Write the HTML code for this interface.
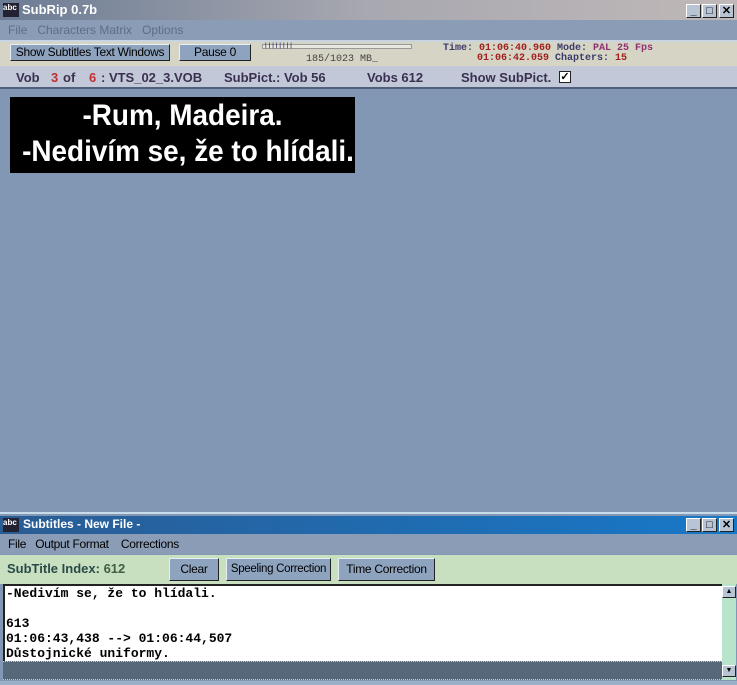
<!DOCTYPE html>
<html><head><meta charset="utf-8"><style>
*{margin:0;padding:0;box-sizing:border-box}
body{width:737px;height:685px;overflow:hidden;background:#8297b3;font-family:"Liberation Sans",sans-serif;position:relative}
.a{position:absolute;white-space:pre}
.wb{position:absolute;width:15px;height:14px;background:#b8c4d4;border:1px solid;border-color:#fff #222 #222 #fff;font-size:11px;line-height:12px;text-align:center;font-weight:bold;color:#000}
.btn{position:absolute;background:#8ea3be;border:1px solid;border-color:#e8eef4 #222 #222 #e8eef4;font-size:12px;text-align:center;color:#000;white-space:nowrap;letter-spacing:-0.3px}
.mono{font-family:"Liberation Mono",monospace;font-weight:bold}
.st{font-family:"Liberation Sans",sans-serif;font-weight:bold;font-size:13px;color:#3a3050;top:70px}
</style></head><body>
<div class="a" style="left:0;top:0;width:737px;height:20px;background:linear-gradient(90deg,#6c7c94,#a8a8b0 50%,#c0b8b8)"></div>
<div class="a" style="left:3px;top:3px;width:16px;height:14px;background:#223;color:#fff;font-size:8px;font-weight:bold;line-height:9px">abc</div>
<div class="a" style="left:22px;top:2px;color:#fff;font-weight:bold;font-size:13px">SubRip 0.7b</div>
<div class="wb" style="left:686px;top:4px">_</div><div class="wb" style="left:702px;top:4px">□</div><div class="wb" style="left:719px;top:4px">✕</div>
<div class="a" style="left:0;top:20px;width:737px;height:20px;background:#8a9cb6"></div>
<div class="a" style="left:8px;top:23px;font-size:12px;color:#5c6e88">File   Characters Matrix   Options</div>
<div class="a" style="left:0;top:40px;width:737px;height:26px;background:#d6d4c4;border-top:2px solid #c8d4e0"></div>
<div class="btn" style="left:10px;top:44px;width:160px;height:17px;line-height:15px">Show Subtitles Text Windows</div>
<div class="btn" style="left:179px;top:44px;width:72px;height:17px;line-height:15px">Pause 0</div>
<div class="a" style="left:262px;top:44px;width:150px;height:5px;border:1px solid #999;background:#e8e8e0"></div>
<div class="a mono" style="left:264px;top:42px;font-size:6px;color:#446">||||||||</div>
<div class="a" style="left:306px;top:54px;font-size:10px;color:#444;font-family:'Liberation Mono',monospace">185/1023 MB_</div>
<div class="a mono" style="left:443px;top:44px;font-size:10px;line-height:10px;color:#3a3a6a">Time: <span style="color:#a02020">01:06:40.960</span> Mode: <span style="color:#903070">PAL 25 Fps</span></div>
<div class="a mono" style="left:477px;top:54px;font-size:10px;line-height:10px;color:#3a3a6a"><span style="color:#a02020">01:06:42.059</span> Chapters: <span style="color:#a02020">15</span></div>
<div class="a" style="left:0;top:66px;width:737px;height:23px;background:#c2c8d8;border-bottom:2px solid #50607a"></div>
<div class="a st" style="left:16px">Vob</div>
<div class="a st" style="left:51px;color:#c03030">3</div>
<div class="a st" style="left:63px">of</div>
<div class="a st" style="left:89px;color:#c03030">6</div>
<div class="a st" style="left:101px">: VTS_02_3.VOB</div>
<div class="a st" style="left:224px">SubPict.: Vob 56</div>
<div class="a st" style="left:367px">Vobs 612</div>
<div class="a st" style="left:461px">Show SubPict.</div>
<div class="a" style="left:559px;top:71px;width:12px;height:12px;background:#fff;border:1px solid #222;font-size:11px;line-height:10px;text-align:center;font-weight:bold">✓</div>
<div class="a" style="left:10px;top:97px;width:345px;height:76px;background:#000"></div>
<div class="a" style="left:10px;top:97px;width:345px;color:#fff;font-weight:bold;font-size:30px;text-align:center;line-height:36px;padding-top:1px;transform:scaleX(0.93);transform-origin:center">-Rum, Madeira.
-Nedivím se, že to hlídali.</div>
<div class="a" style="left:0;top:512px;width:737px;height:2px;background:#c8dcec"></div>
<div class="a" style="left:0;top:516px;width:737px;height:18px;background:linear-gradient(90deg,#2a5c94,#1878c8)"></div>
<div class="a" style="left:3px;top:518px;width:16px;height:14px;background:#223;color:#fff;font-size:8px;font-weight:bold;line-height:9px">abc</div>
<div class="a" style="left:23px;top:517px;color:#fff;font-weight:bold;font-size:12px">Subtitles - New File -</div>
<div class="wb" style="left:686px;top:518px">_</div><div class="wb" style="left:702px;top:518px">□</div><div class="wb" style="left:719px;top:518px">✕</div>
<div class="a" style="left:0;top:534px;width:737px;height:20px;background:#8a9cb6"></div>
<div class="a" style="left:8px;top:537px;font-size:12px;color:#000;letter-spacing:-0.3px">File   Output Format    Corrections</div>
<div class="a" style="left:0;top:555px;width:737px;height:29px;background:#c8e0c0"></div>
<div class="a" style="left:7px;top:561px;font-size:13px;font-weight:bold;color:#2a4a4a">SubTitle Index: <span style="color:#406040">612</span></div>
<div class="btn" style="left:169px;top:558px;width:50px;height:23px;line-height:21px">Clear</div>
<div class="btn" style="left:226px;top:558px;width:105px;height:23px;line-height:21px;font-size:11.5px">Speeling Correction</div>
<div class="btn" style="left:338px;top:558px;width:97px;height:23px;line-height:21px">Time Correction</div>
<div class="a" style="left:3px;top:584px;width:719px;height:77px;background:#fff;border-top:2px solid #222;border-left:2px solid #222"></div>
<div class="a mono" style="left:6px;top:586px;font-size:13px;line-height:15px;color:#000">-Nedivím se, že to hlídali.

613
01:06:43,438 --> 01:06:44,507
Důstojnické uniformy.</div>
<div class="a" style="left:722px;top:584px;width:14px;height:96px;background:#b8e4cc"></div>
<div class="wb" style="left:722px;top:586px;width:14px;height:12px;font-size:7px;line-height:10px">▲</div>
<div class="wb" style="left:722px;top:665px;width:14px;height:12px;font-size:7px;line-height:10px">▼</div>
<div class="a" style="left:3px;top:661px;width:719px;height:19px;background:#56687a;border-top:1px dotted #ccc;border-bottom:1px dotted #ccc"></div>
<div class="a" style="left:0;top:681px;width:737px;height:4px;background:#9ab0c8"></div>
</body></html>
